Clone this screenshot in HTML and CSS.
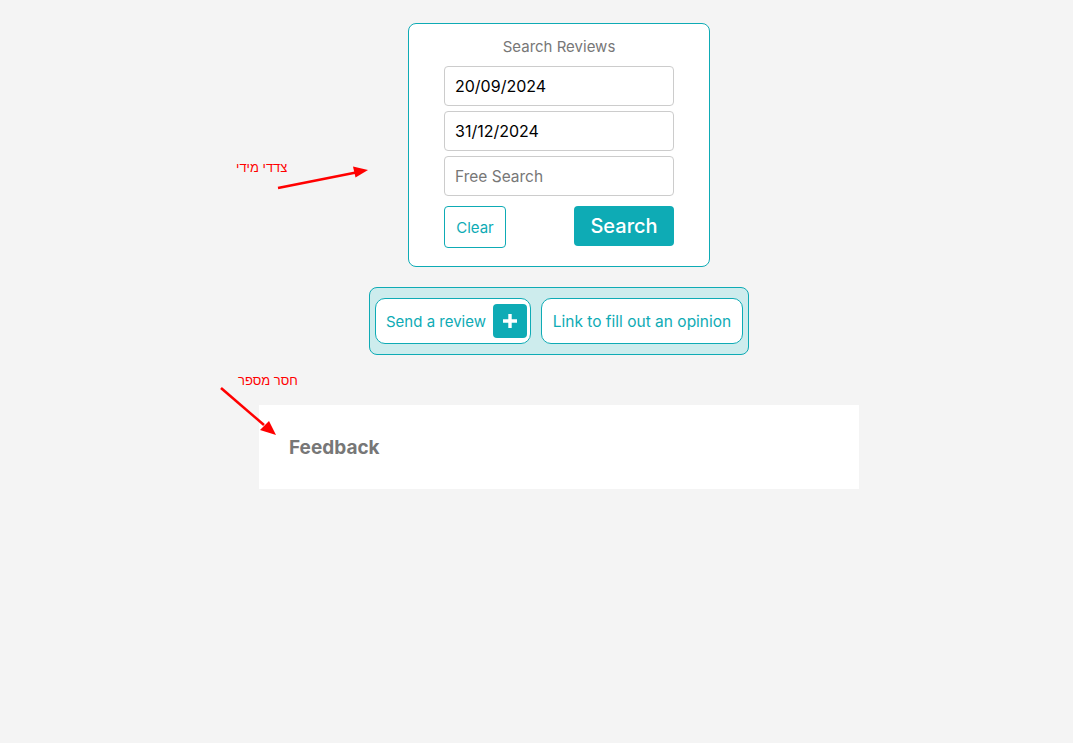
FILE: index.html
```html
<!DOCTYPE html>
<html lang="en">
<head>
<meta charset="utf-8">
<title>Reviews</title>
<link rel="stylesheet" href="styles.css">
</head>
<body>
<main class="page">
  <section class="search-card">
    <h2 class="search-title">Search Reviews</h2>
    <input class="field field-date" type="text" value="20/09/2024">
    <input class="field field-date" type="text" value="31/12/2024">
    <input class="field" type="text" placeholder="Free Search">
    <div class="search-actions">
      <button class="btn-clear">Clear</button>
      <button class="btn-search">Search</button>
    </div>
  </section>

  <nav class="action-bar">
    <button class="action-btn">Send a review
      <span class="plus-box">
        <svg width="18" height="18" viewBox="0 0 18 18"><path d="M9 2v14M2 9h14" stroke="#fff" stroke-width="3.4" fill="none"/></svg>
      </span>
    </button>
    <button class="action-btn action-link">Link to fill out an opinion</button>
  </nav>

  <section class="feedback-card">
    <h3 class="feedback-title">Feedback</h3>
  </section>
</main>

<div class="note note-one" dir="rtl">צדדי מידי</div>
<svg class="arrow arrow-one" width="110" height="30" viewBox="0 0 110 30">
  <path d="M8 25 L86 9.5" stroke="#f00" stroke-width="2.6" fill="none"/>
  <path d="M98 7 L83 3.5 L85.5 14.5 Z" fill="#f00"/>
</svg>
<div class="note note-two" dir="rtl">חסר מספר</div>
<svg class="arrow arrow-two" width="70" height="60" viewBox="0 0 70 60">
  <path d="M5 3 L48 40" stroke="#f00" stroke-width="2.6" fill="none"/>
  <path d="M60 50 L53 36 L44 45 Z" fill="#f00"/>
</svg>
</body>
</html>
```

FILE: styles.css
```css
* { box-sizing: border-box; }
html, body { margin: 0; padding: 0; }
body {
  background: #f4f4f4;
  font-family: "Inter", "Noto Sans", sans-serif;
  width: 1073px;
  height: 743px;
  position: relative;
  overflow: hidden;
}
.page {
  display: flex;
  flex-direction: column;
  align-items: center;
  padding: 23px 0 0 45px;
}
.search-card {
  width: 302px;
  height: 244px;
  background: #fff;
  border: 1px solid #0eabb5;
  border-radius: 8px;
  display: flex;
  flex-direction: column;
  align-items: center;
  padding-top: 14px;
  gap: 5px;
}
.search-title {
  margin: 0 0 5px;
  font-size: 15px;
  font-weight: 400;
  color: #777;
  line-height: 18px;
}
.field {
  width: 230px;
  height: 40px;
  border: 1px solid #ccc;
  border-radius: 4px;
  padding: 0 10px;
  font-family: inherit;
  font-size: 15.5px;
  color: #111;
  background: #fff;
  outline: none;
}
.field-date { font-size: 16px; color: #000; }
.field::placeholder { color: #777; }
.search-actions {
  width: 230px;
  display: flex;
  justify-content: space-between;
  align-items: flex-start;
  margin-top: 5px;
}
.btn-clear {
  width: 62px;
  height: 42px;
  background: #fff;
  border: 1px solid #0eabb5;
  border-radius: 4px;
  color: #0eabb5;
  font-family: inherit;
  font-size: 15px;
  padding: 0;
}
.btn-search {
  width: 100px;
  height: 40px;
  background: #0eabb5;
  border: none;
  border-radius: 4px;
  color: #fff;
  font-family: inherit;
  font-size: 20px;
  font-weight: 500;
  padding: 0;
}
.action-bar {
  margin-top: 20px;
  width: 380px;
  height: 68px;
  background: #cdeced;
  border: 1px solid #0eabb5;
  border-radius: 8px;
  display: flex;
  align-items: center;
  padding: 0 5px;
  gap: 10px;
}
.action-btn {
  height: 46px;
  width: 156px;
  background: #fff;
  border: 1px solid #0eabb5;
  border-radius: 10px;
  color: #0eabb5;
  font-family: inherit;
  font-size: 15px;
  display: flex;
  align-items: center;
  justify-content: space-between;
  padding: 0 3px 0 10px;
}
.action-link {
  width: 202px;
  justify-content: center;
  padding: 0;
  font-size: 15.5px;
}
.plus-box {
  width: 34px;
  height: 34px;
  background: #0eabb5;
  border-radius: 4px;
  display: flex;
  align-items: center;
  justify-content: center;
}
.feedback-card {
  margin-top: 50px;
  width: 600px;
  height: 84px;
  background: #fff;
  display: flex;
  align-items: center;
  padding-left: 30px;
}
.feedback-title {
  margin: 0;
  font-size: 19px;
  font-weight: 700;
  color: #777;
  padding-top: 1px;
}
.note {
  position: absolute;
  color: #f00;
  font-family: "Liberation Sans", "DejaVu Sans", sans-serif;
  font-size: 13px;
  line-height: 15px;
}
.note-one { left: 236px; top: 160px; }
.note-two { left: 238px; top: 373px; }
.arrow { position: absolute; }
.arrow-one { left: 270px; top: 163px; }
.arrow-two { left: 216px; top: 385px; }
```
